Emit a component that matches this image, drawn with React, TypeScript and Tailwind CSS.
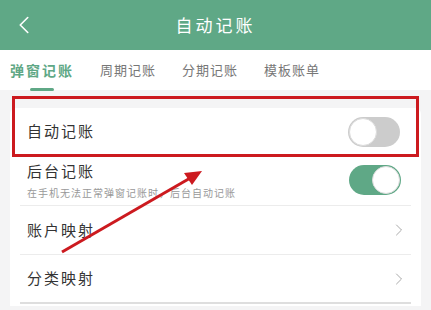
import { ChevronLeft, ChevronRight } from "lucide-react";

const font = { fontFamily: '"Noto Sans CJK SC", "Noto Sans", sans-serif' };

function Toggle({ on }: { on: boolean }) {
  return (
    <div
      className={`flex h-[30px] w-[52px] items-center rounded-full p-[1px] ${
        on ? "justify-end bg-[#5fa886]" : "justify-start bg-[#cccccc]"
      }`}
    >
      <div className="h-[28px] w-[28px] rounded-full border border-[#dcdcdc] bg-white" />
    </div>
  );
}

export default function App() {
  const tabs = ["弹窗记账", "周期记账", "分期记账", "模板账单"];

  return (
    <div className="relative h-[310px] w-[431px] overflow-hidden bg-[#f4f4f5]" style={font}>
      {/* Cabecera */}
      <div className="relative flex h-[50px] items-center justify-center bg-[#5fa886]">
        <ChevronLeft
          size={30}
          strokeWidth={1.3}
          className="absolute left-[9px] top-[10px] text-white"
        />
        <span className="text-[17px] tracking-[3px] text-white">自动记账</span>
      </div>

      {/* Pestañas */}
      <div className="flex h-[40px] items-center bg-white pl-[10px]">
        {tabs.map((t, i) => (
          <div key={t} className="relative mr-[26px] flex h-full items-center">
            <span
              className={
                i === 0
                  ? "text-[14px] font-bold tracking-[2px] text-[#5fa886]"
                  : "text-[13px] tracking-[1px] text-[#777]"
              }
            >
              {t}
            </span>
            {i === 0 && (
              <div className="absolute bottom-[-1px] left-[20px] h-[3px] w-[24px] rounded-full bg-[#5fa886]" />
            )}
          </div>
        ))}
      </div>

      {/* Tarjeta */}
      <div className="mx-[10px] mt-[18px] rounded-t-md bg-white pb-[2px]">
        <div className="flex h-[47px] items-center justify-between pl-[17px] pr-[21px]">
          <span className="text-[15px] tracking-[2px] text-[#333]">自动记账</span>
          <Toggle on={false} />
        </div>
        <div className="mx-[10px] flex h-[51px] items-center justify-between border-b border-[#ececec] pl-[7px] pr-[10px]">
          <div className="flex flex-col">
            <span className="text-[15px] leading-[20px] tracking-[2px] text-[#333]">后台记账</span>
            <span className="mt-[5px] text-[10px] leading-[14px] tracking-[1px] text-[#999]">
              在手机无法正常弹窗记账时，后台自动记账
            </span>
          </div>
          <Toggle on={true} />
        </div>
        <div className="mx-[10px] flex h-[49px] items-center justify-between border-b border-[#ececec] pl-[7px] pr-[2px]">
          <span className="text-[15px] tracking-[2px] text-[#333]">账户映射</span>
          <ChevronRight size={20} strokeWidth={1} className="text-[#999]" />
        </div>
        <div className="mx-[10px] flex h-[49px] items-center justify-between border-b-2 border-[#dedede] pl-[7px] pr-[2px]">
          <span className="text-[15px] tracking-[2px] text-[#333]">分类映射</span>
          <ChevronRight size={20} strokeWidth={1} className="text-[#999]" />
        </div>
      </div>

      {/* Anotaciones */}
      <div className="pointer-events-none absolute left-[12px] top-[96px] h-[61px] w-[407px] border-[3px] border-[#cc1a1f]" />
      <svg className="pointer-events-none absolute left-0 top-0" width="431" height="310">
        <line x1="62" y1="252" x2="192" y2="177" stroke="#cc1a1f" strokeWidth="3" />
        <polygon points="202,171 184,173 192,185" fill="#cc1a1f" />
      </svg>
    </div>
  );
}
